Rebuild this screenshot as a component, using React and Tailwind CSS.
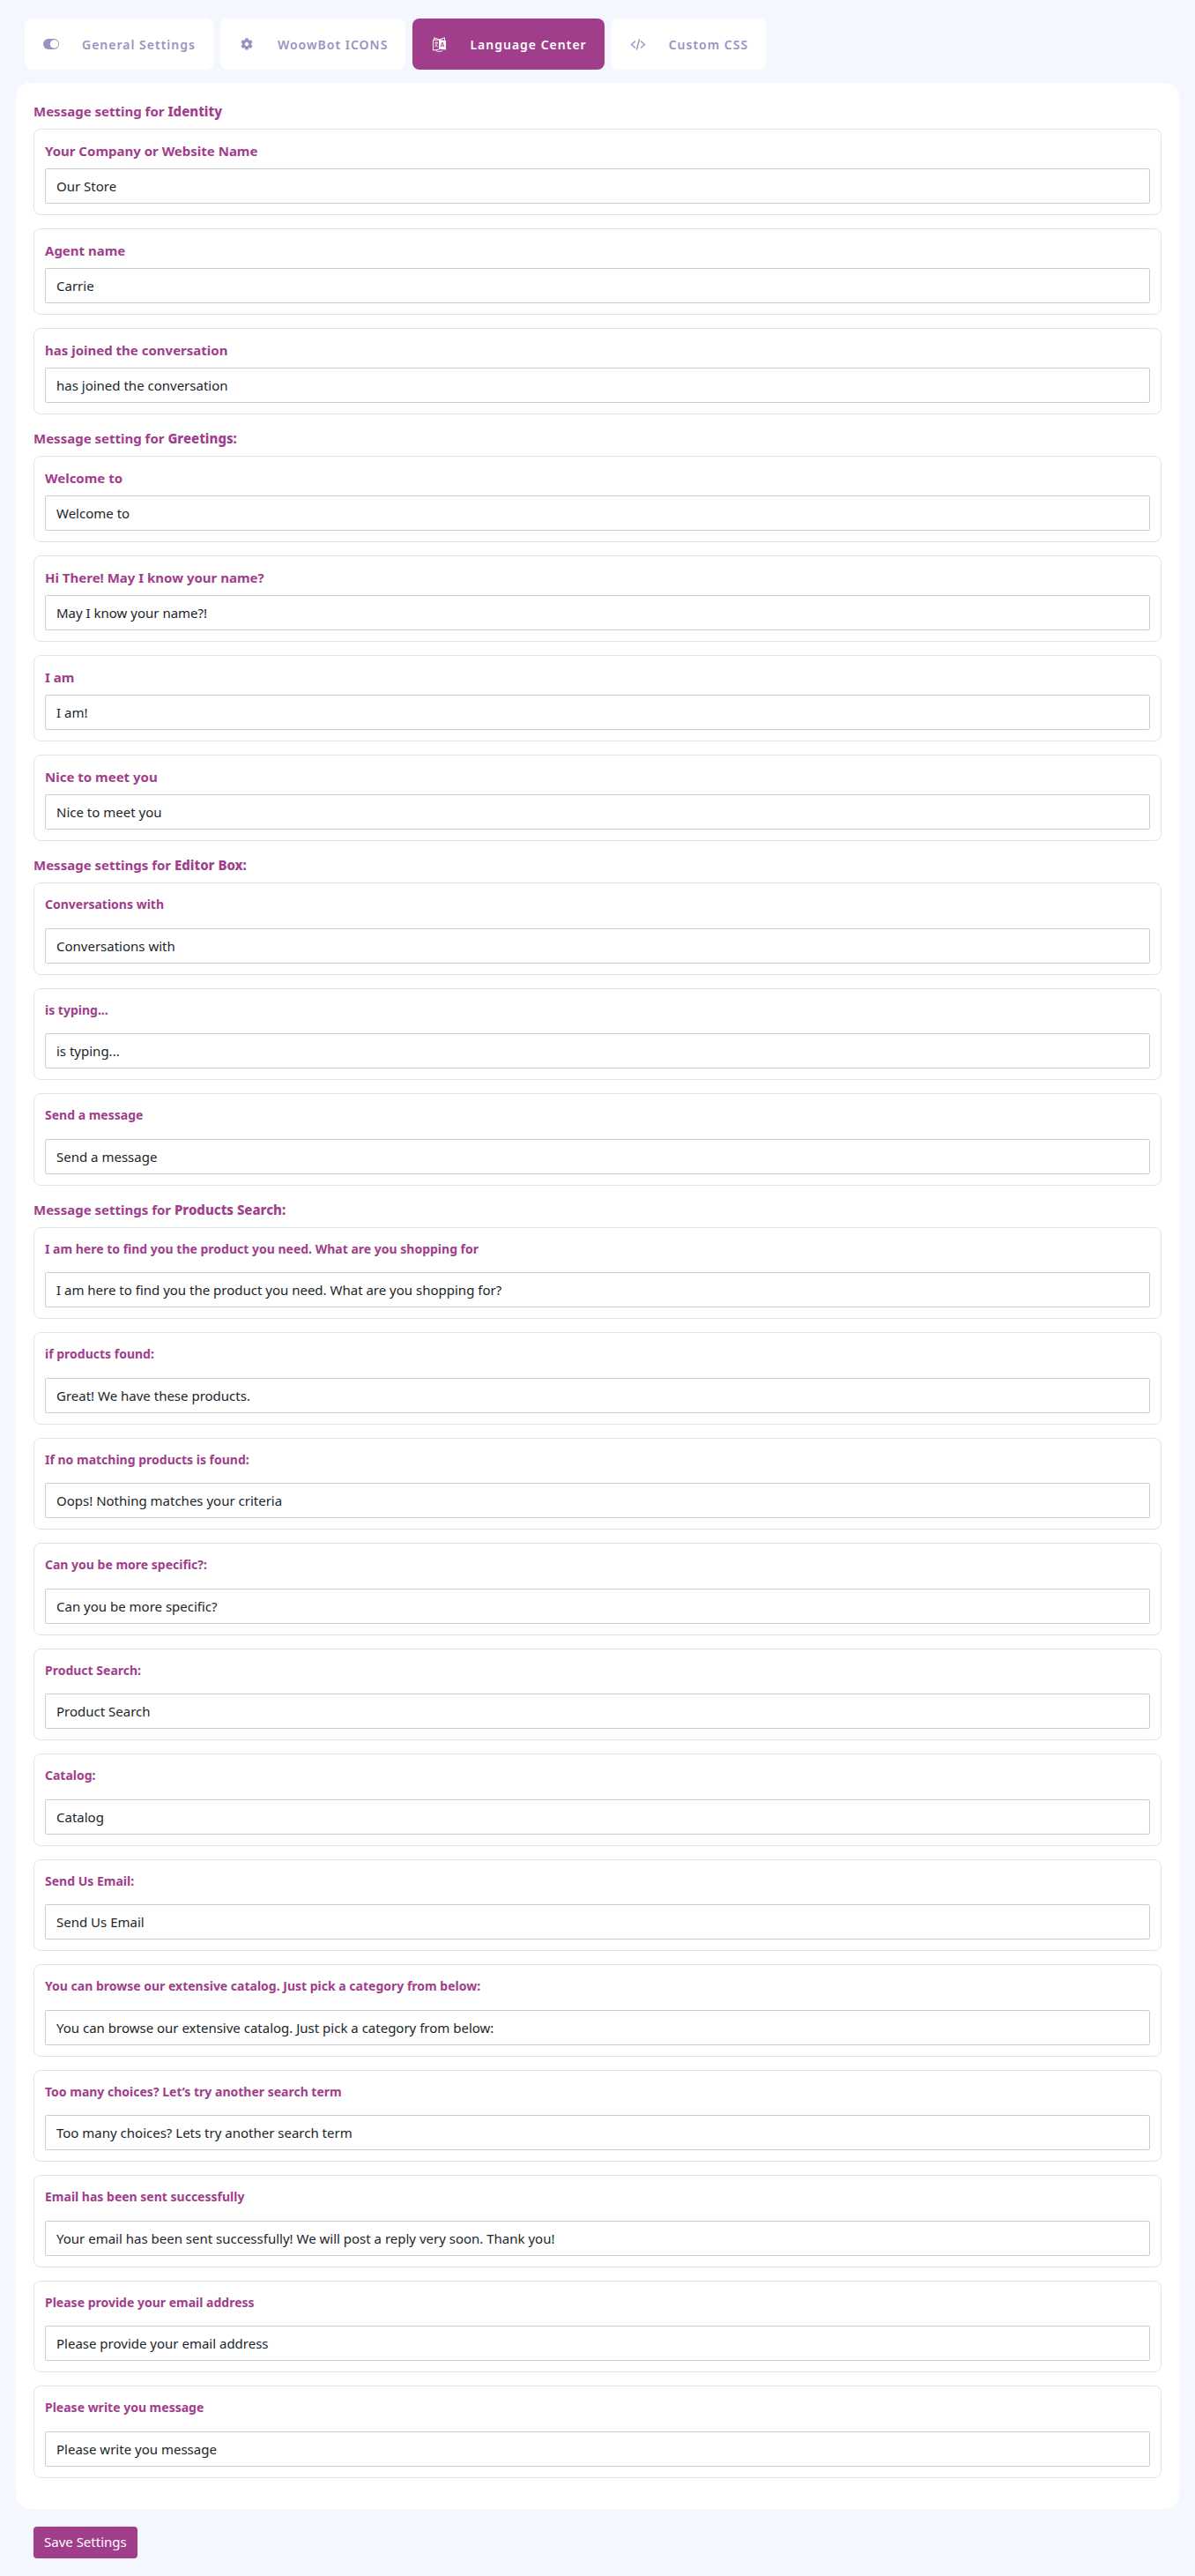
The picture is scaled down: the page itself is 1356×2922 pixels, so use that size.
import { useState } from 'react'
import { FaCog } from 'react-icons/fa'

const tabs = [
  { id: 'general', label: 'General Settings', icon: ToggleIcon },
  { id: 'icons', label: 'WoowBot ICONS', icon: GearIcon },
  { id: 'language', label: 'Language Center', icon: TranslateIcon },
  { id: 'css', label: 'Custom CSS', icon: CodeIcon },
]

const sections = [
  {
    prefix: 'Message setting for',
    title: 'Identity',
    fields: [
      { label: 'Your Company or Website Name', value: 'Our Store' },
      { label: 'Agent name', value: 'Carrie' },
      { label: 'has joined the conversation', value: 'has joined the conversation' },
    ],
  },
  {
    prefix: 'Message setting for',
    title: 'Greetings:',
    fields: [
      { label: 'Welcome to', value: 'Welcome to' },
      { label: 'Hi There! May I know your name?', value: 'May I know your name?!' },
      { label: 'I am', value: 'I am!' },
      { label: 'Nice to meet you', value: 'Nice to meet you' },
    ],
  },
  {
    prefix: 'Message settings for',
    title: 'Editor Box:',
    small: true,
    fields: [
      { label: 'Conversations with', value: 'Conversations with' },
      { label: 'is typing...', value: 'is typing...' },
      { label: 'Send a message', value: 'Send a message' },
    ],
  },
  {
    prefix: 'Message settings for',
    title: 'Products Search:',
    small: true,
    fields: [
      {
        label: 'I am here to find you the product you need. What are you shopping for',
        value: 'I am here to find you the product you need. What are you shopping for?',
      },
      { label: 'if products found:', value: 'Great! We have these products.' },
      { label: 'If no matching products is found:', value: 'Oops! Nothing matches your criteria' },
      { label: 'Can you be more specific?:', value: 'Can you be more specific?' },
      { label: 'Product Search:', value: 'Product Search' },
      { label: 'Catalog:', value: 'Catalog' },
      { label: 'Send Us Email:', value: 'Send Us Email' },
      {
        label: 'You can browse our extensive catalog. Just pick a category from below:',
        value: 'You can browse our extensive catalog. Just pick a category from below:',
      },
      {
        label: 'Too many choices? Let’s try another search term',
        value: 'Too many choices? Lets try another search term',
      },
      {
        label: 'Email has been sent successfully',
        value: 'Your email has been sent successfully! We will post a reply very soon. Thank you!',
      },
      { label: 'Please provide your email address', value: 'Please provide your email address' },
      { label: 'Please write you message', value: 'Please write you message' },
    ],
  },
]

function ToggleIcon() {
  return (
    <svg viewBox="0 0 18 12" className="w-[18px] h-3" aria-hidden="true">
      <rect width="18" height="12" rx="6" fill="currentColor" />
      <circle cx="12.5" cy="6" r="4.7" fill="#fff" />
    </svg>
  )
}

function GearIcon() {
  return <FaCog className="w-[14px] h-[14px]" aria-hidden="true" />
}

function TranslateIcon() {
  return (
    <svg viewBox="0 0 15 17" className="w-[15px] h-[17px]" fill="none" stroke="currentColor" aria-hidden="true">
      {/* back flaps */}
      <path d="M1.5 3.500V0.800L7.500 3L13.500 0.800V3.500" />
      {/* left page */}
      <path d="M0.500 3.500L7.500 3V14L0.500 15Z" />
      <path d="M2 6.300H6M4 5V6.300M5.300 6.300C5 9 3.500 10.500 2 11.300M2.700 7.500C3.500 9.500 4.500 10.700 6 11.500" strokeWidth="0.8" />
      {/* right page */}
      <path d="M7 3L15 4V14.500L7 13.500Z" fill="currentColor" stroke="none" />
      <path d="M9 11.500L11 6L13 11.500M9.700 9.800H12.300" stroke="#a03e8c" strokeWidth="0.9" />
      {/* bottom arrow */}
      <path d="M3.500 15.500C5.500 16.800 9.500 16.800 11.500 15.300" strokeWidth="0.9" />
    </svg>
  )
}

function CodeIcon() {
  return (
    <svg
      viewBox="0 0 18 14"
      className="w-[18px] h-[14px]"
      fill="none"
      stroke="currentColor"
      strokeWidth="1.4"
      strokeLinecap="round"
      aria-hidden="true"
    >
      <path d="M5.500 4L1.500 7.500l4 3.500M12.500 4l4 3.500-4 3.500M10.500 2l-3 11" />
    </svg>
  )
}

function Field({ id, label, value, small }) {
  const [text, setText] = useState(value)

  return (
    <div className="border border-[#e2e2ea] rounded-lg p-3">
      <div className={small ? 'text-[15px] leading-normal mb-4' : 'text-[15px] leading-6 mb-2'}>
        <label htmlFor={id} className={`font-bold text-[#a03e8c] ${small ? 'text-[14px]' : ''}`}>
          {label}
        </label>
      </div>
      <input
        id={id}
        type="text"
        value={text}
        onChange={(e) => setText(e.target.value)}
        className="block w-full h-10 px-3 border border-[#ccced2] rounded-xs bg-white text-[15px] text-[#212529]"
      />
    </div>
  )
}

function App() {
  const [active, setActive] = useState('language')

  return (
    <div className="min-h-screen bg-[#f4f7fe] px-[18px] py-[21px] font-['Noto_Sans','Open_Sans',sans-serif]">
      {/* Tabs */}
      <nav className="flex flex-wrap gap-2 px-[10px] mb-[15px]">
        {tabs.map(({ id, label, icon: Icon }) => (
          <button
            key={id}
            type="button"
            onClick={() => setActive(id)}
            className={`flex items-center h-[58px] px-5 rounded-lg text-[14px] font-semibold tracking-[1px] ${
              active === id ? 'bg-[#a03e8c] text-white' : 'bg-white text-[#9a93c2]'
            }`}
          >
            <span className="flex justify-center w-5 mr-[25px]">
              <Icon />
            </span>
            {label}
          </button>
        ))}
      </nav>

      <form onSubmit={(e) => e.preventDefault()}>
        {/* Messages */}
        <div className="bg-white rounded-2xl p-5">
          {sections.map((section, s) => (
            <section key={section.title}>
              <h2 className="text-[15px] leading-6 font-bold text-[#a03e8c] mb-2">
                {section.prefix} <span className="font-extrabold">{section.title}</span>
              </h2>
              <div className="flex flex-col gap-[15px] pb-[15px]">
                {section.fields.map((field, i) => (
                  <Field key={field.label} id={`msg-${s}-${i}`} small={section.small} {...field} />
                ))}
              </div>
            </section>
          ))}
        </div>

        <button type="submit" className="block mt-5 ml-5 h-9 px-3 rounded bg-[#a03e8c] text-[15px] text-white">
          Save Settings
        </button>
      </form>
    </div>
  )
}

export default App
